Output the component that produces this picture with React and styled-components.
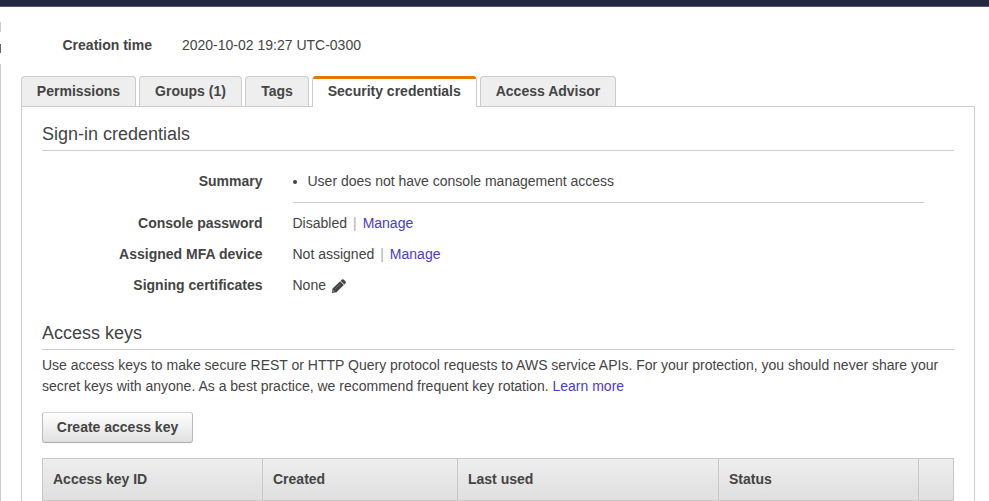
import React from "react";
import styled, { createGlobalStyle } from "styled-components";

const Global = createGlobalStyle`
  *, *::before, *::after { box-sizing: border-box; }
  body { margin: 0; background: #fff; color: #444; font: 14px/21px "Liberation Sans", Arial, sans-serif; }
`;
const Page = styled.div`height: 501px; overflow: hidden;`;
const TopBar = styled.header`height: 7px; background: #232a40; border-bottom: 1px solid #55576a;`;
const Body = styled.div`display: flex;`;
const Rail = styled.div`
  width: 1px; flex: none; height: 494px; padding-top: 15px; display: flex; flex-direction: column;
`;
const RailMark = styled.span`
  flex: ${(p) => (p.$h ? "none" : "1")}; height: ${(p) => p.$h || 0}px; margin-bottom: ${(p) => p.$gap || 0}px;
  background: ${(p) => (p.$dark ? "#666" : "#ccc")};
`;
const Main = styled.main`width: 954px; margin-left: 20px;`;
const Created = styled.div`display: flex; gap: 30px; padding: 28px 0 0 41.5px; height: 69px;`;
const Tabs = styled.nav`display: flex; gap: 3px; height: 30px; position: relative; z-index: 1;`;
const Tab = styled.a`
  flex: none; width: ${(p) => p.$w}px; height: 30px; text-align: center; font-weight: bold;
  border: 1px solid #ccc; border-bottom: 0; border-radius: 4px 4px 0 0;
  padding-top: 4px; background: #eee;
`;
const ActiveTab = styled(Tab)`
  height: 31px; padding: 4px 0.5px 0 0; background: #fff;
  &::before {
    content: ""; display: block; height: 3px; margin: -5px 0 2px; width: ${(p) => p.$w - 2}px;
    background: #e07b00; border-radius: 3px 3px 0 0;
  }
`;
const Panel = styled.section`border: 1px solid #ccc; height: 430px; padding: 16px 20px 0;`;
const Title = styled.h2`
  margin: 0; font-size: 18px; line-height: 22px; font-weight: normal; height: 28px; border-bottom: 1px solid #ccc;
`;
const Row = styled.div`
  display: grid; grid-template-columns: 220.5px 631.5px; column-gap: 30px; height: 31px;
`;
const Label = styled.strong`text-align: right;`;
const Details = styled.div`padding-top: 20px; height: 171px;`;
const Summary = styled.ul`margin: 0 0 10px; padding: 0 0 11px 15px; height: 32px; border-bottom: 1px solid #ccc;`;
const SummaryRow = styled(Row)`height: 42px;`;
const Link = styled.a`color: #4a3cc8;`;
const Bar = styled.span`color: #aaa; margin: 0 6px;`;
const Pencil = styled.svg`vertical-align: -3px; margin-left: 6px;`;
const Note = styled.p`margin: 5px 0 15px; white-space: nowrap;`;
const Button = styled.button`
  width: 151px; height: 31px; border: 1px solid #bbb; border-top-color: #d5d5d5; border-bottom-color: #aaa;
  border-radius: 3px; padding: 0 0 2px; display: block;
  background: linear-gradient(#fff, #e0e0e0); font: bold 14px "Liberation Sans", Arial, sans-serif; color: #444;
`;
const Head = styled.div`
  display: grid; grid-template-columns: 220px 195px 261px 200px 35px; margin-top: 15px; height: 43px;
  border: 1px solid #c8c8c8; border-right: 0; background: linear-gradient(#eee, #dfdfdf);
`;
const Cell = styled.div`font-weight: bold; border-right: 1px solid #c8c8c8; padding: 10px;`;

export default function App() {
  return (
    <Page>
      <Global />
      <TopBar />
      <Body>
        <Rail>
          <RailMark $h={10} $gap={12} />
          <RailMark $h={9} $gap={11} $dark />
          <RailMark />
        </Rail>
        <Main>
          <Created><strong>Creation time</strong><span>2020-10-02 19:27 UTC-0300</span></Created>
          <Tabs>
            <Tab $w={115}>Permissions</Tab>
            <Tab $w={103}>Groups (1)</Tab>
            <Tab $w={64}>Tags</Tab>
            <ActiveTab $w={165}>Security credentials</ActiveTab>
            <Tab $w={136}>Access Advisor</Tab>
          </Tabs>
          <Panel>
            <Title>Sign-in credentials</Title>
            <Details>
              <SummaryRow><Label>Summary</Label><Summary><li>User does not have console management access</li></Summary></SummaryRow>
              <Row><Label>Console password</Label><span>Disabled<Bar>|</Bar><Link>Manage</Link></span></Row>
              <Row><Label>Assigned MFA device</Label><span>Not assigned<Bar>|</Bar><Link>Manage</Link></span></Row>
              <Row>
                <Label>Signing certificates</Label>
                <span>None
                  <Pencil width="14" height="14" viewBox="0 0 14 14">
                    <path fill="#444" d="M0 14L.6 9.500 8.100 2.200 11.800 5.900 4.500 13.200z" />
                    <path fill="#444" d="M8.600 1.700L10 .5q.8-.6 1.600 0l2 1.900q.6.800 0 1.600L12.300 5.400z" />
                    <path stroke="#777" strokeWidth=".7" d="M3 10.200L8.300 5" />
                    <path fill="#bbb" d="M1.400 11.300l1.300 1.300-.9.200-.6-.6z" />
                  </Pencil>
                </span>
              </Row>
            </Details>
            <Title>Access keys</Title>
            <Note>
              Use access keys to make secure REST or HTTP Query protocol requests to AWS service APIs. For your protection, you should never share your<br />
              secret keys with anyone. As a best practice, we recommend frequent key rotation. <Link>Learn more</Link>
            </Note>
            <Button>Create access key</Button>
            <Head><Cell>Access key ID</Cell><Cell>Created</Cell><Cell>Last used</Cell><Cell>Status</Cell><Cell /></Head>
          </Panel>
        </Main>
      </Body>
    </Page>
  );
}
